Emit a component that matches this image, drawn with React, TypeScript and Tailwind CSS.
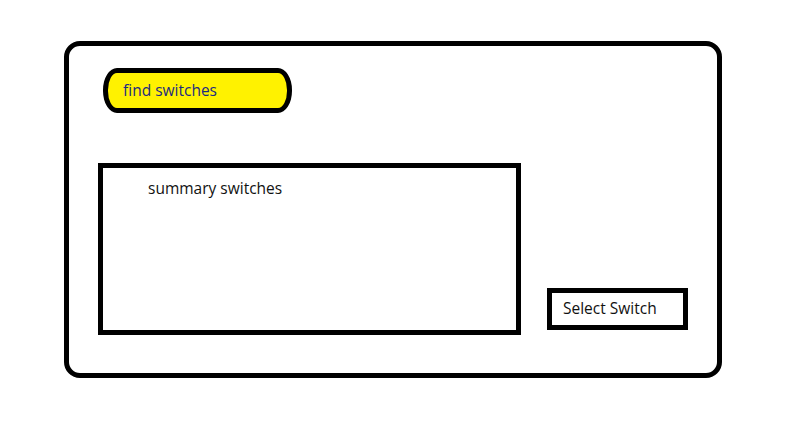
export default function App() {
  return (
    <div className="w-[812px] h-[442px] bg-white pl-[64px] pt-[41px]" style={{ fontFamily: '"Open Sans", "Noto Sans", sans-serif' }}>
      <div className="w-[658px] h-[337px] border-[5px] border-black rounded-[16px] flex flex-col pl-[29px] pt-[22px]">
        <div className="ml-[5px] w-[189px] h-[45px] bg-[#fff200] border-[5px] border-black rounded-[14px/22px] flex items-center pl-[15px] text-[15.5px] text-[#1c2a80]">
          find switches
        </div>
        <div className="mt-[50px] flex items-end">
          <div className="w-[423px] h-[172px] border-[5px] border-black pl-[45px] pt-[9px] text-[15.5px] text-[#111]">
            summary switches
          </div>
          <div className="ml-[26px] mb-[5px] w-[141px] h-[42px] border-[5px] border-black flex items-center pl-[11px] text-[15.5px] text-[#111]">
            Select Switch
          </div>
        </div>
      </div>
    </div>
  );
}
